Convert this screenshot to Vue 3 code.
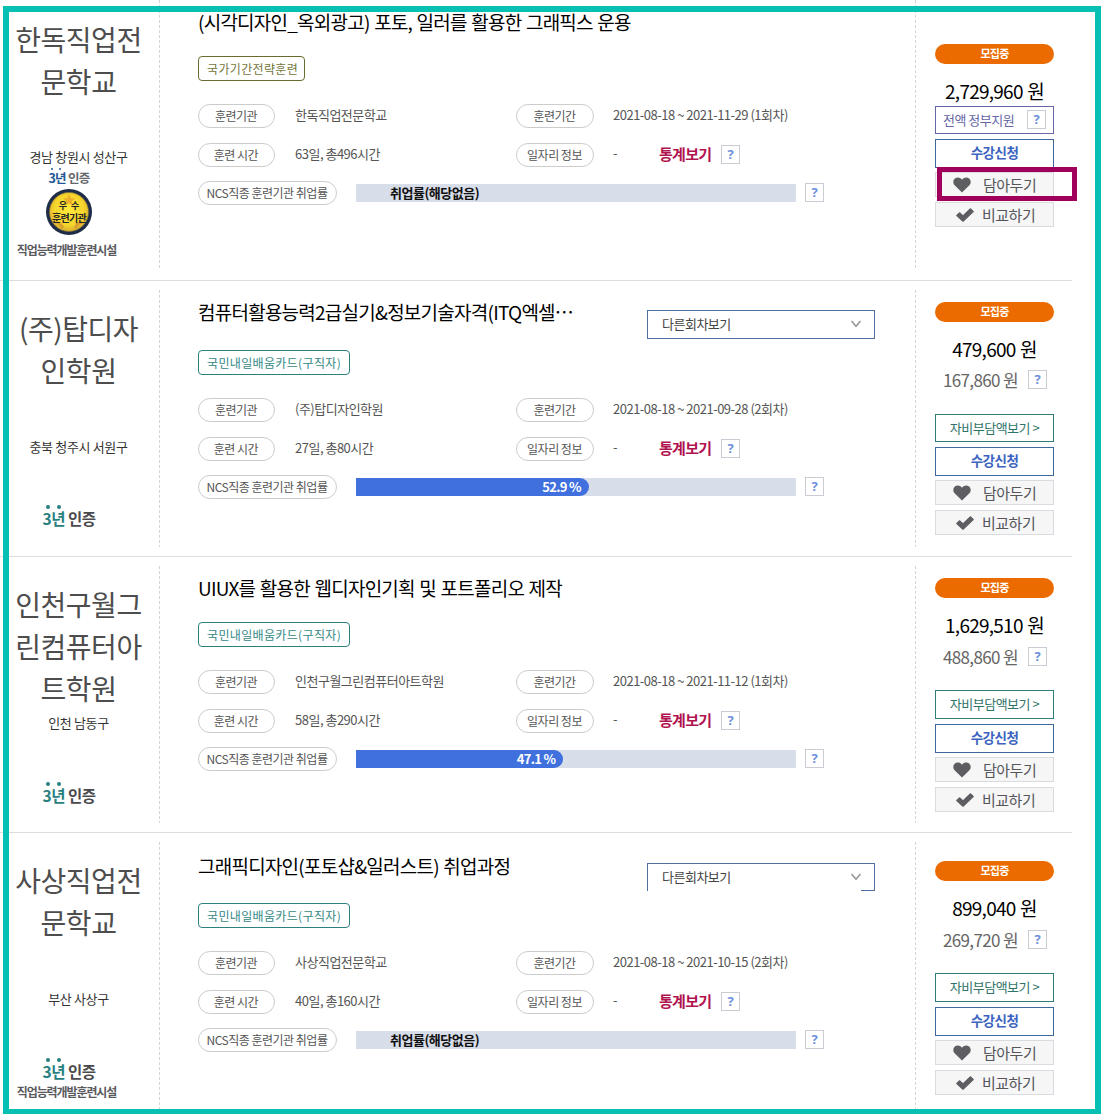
<script setup>
const rows = [
  {
    id: 'r1', name: ['한독직업전', '문학교'], place: '경남 창원시 성산구', badge: 'small', medal: true, facility: true,
    title: '(시각디자인_옥외광고) 포토, 일러를 활용한 그래픽스 운용', tag: '국가기간전략훈련', olive: true,
    org: '한독직업전문학교', period: '2021-08-18 ~ 2021-11-29 (1회차)', hours: '63일, 총496시간',
    rate: null, price: '2,729,960 원', sub: null
  },
  {
    id: 'r2', name: ['(주)탑디자', '인학원'], place: '충북 청주시 서원구', badge: 'large',
    title: '컴퓨터활용능력2급실기&정보기술자격(ITQ엑셀⋯', tag: '국민내일배움카드(구직자)', select: true,
    org: '(주)탑디자인학원', period: '2021-08-18 ~ 2021-09-28 (2회차)', hours: '27일, 총80시간',
    rate: 52.9, price: '479,600 원', sub: '167,860 원'
  },
  {
    id: 'r3', name: ['인천구월그', '린컴퓨터아', '트학원'], place: '인천 남동구', badge: 'large',
    title: 'UIUX를 활용한 웹디자인기획 및 포트폴리오 제작', tag: '국민내일배움카드(구직자)',
    org: '인천구월그린컴퓨터아트학원', period: '2021-08-18 ~ 2021-11-12 (1회차)', hours: '58일, 총290시간',
    rate: 47.1, price: '1,629,510 원', sub: '488,860 원'
  },
  {
    id: 'r4', name: ['사상직업전', '문학교'], place: '부산 사상구', badge: 'large', facility: true,
    title: '그래픽디자인(포토샵&일러스트) 취업과정', tag: '국민내일배움카드(구직자)', select: true,
    org: '사상직업전문학교', period: '2021-08-18 ~ 2021-10-15 (2회차)', hours: '40일, 총160시간',
    rate: null, price: '899,040 원', sub: '269,720 원'
  }
]
</script>

<template>
  <div class="page">
    <section v-for="r in rows" :key="r.id" class="row" :class="r.id">
      <div class="school">
        <div class="name"><div v-for="n in r.name" :key="n">{{ n }}</div></div>
        <div class="place">{{ r.place }}</div>
        <div class="marks">
          <div class="cert" :class="r.badge"><span class="yr"><i></i><i></i>3년</span> 인증</div>
          <div v-if="r.medal" class="medal">
            <svg width="48" height="48" viewBox="0 0 48 48">
              <defs>
                <radialGradient id="gold" cx="50%" cy="45%" r="60%">
                  <stop offset="0" stop-color="#ffe93c" /><stop offset=".65" stop-color="#f6d52c" /><stop offset="1" stop-color="#cfa02e" />
                </radialGradient>
              </defs>
              <circle cx="24" cy="24" r="23" fill="#1f2c47" />
              <circle cx="24" cy="24" r="19.500" fill="url(#gold)" stroke="#8a7a3a" stroke-width=".6" />
              <path d="M24 6l1.800 4 4.200.4-3.200 2.800 1 4.200-3.800-2.200-3.800 2.200 1-4.200-3.200-2.800 4.200-.4z" fill="#eeb02a" />
              <path d="M11 34l4 2 3 4M37 34l-4 2-3 4" stroke="#dba030" stroke-width="3" fill="none" />
            </svg>
            <div class="medal-text"><span class="m1">우 수</span><span class="m2">훈련기관</span></div>
          </div>
          <div v-if="r.facility" class="facility">직업능력개발훈련시설</div>
        </div>
      </div>

      <div class="course">
        <div class="head">
          <div class="title">{{ r.title }}</div>
          <div v-if="r.select" class="select">
            <span>다른회차보기</span>
            <svg width="12" height="8" viewBox="0 0 12 8"><path d="M1.500 1L6 6.200L10.500 1" fill="none" stroke="#999" stroke-width="1.700" /></svg>
          </div>
        </div>
        <div class="tag" :class="{ olive: r.olive }">{{ r.tag }}</div>
        <div class="info">
          <span class="label">훈련기관</span><span class="val">{{ r.org }}</span>
          <span class="label">훈련기간</span><span class="val">{{ r.period }}</span>
        </div>
        <div class="info second">
          <span class="label">훈련 시간</span><span class="val">{{ r.hours }}</span>
          <span class="label">일자리 정보</span>
          <span class="val job"><span class="dash">-</span><b class="stat">통계보기</b><span class="q">?</span></span>
        </div>
        <div class="rate">
          <span class="label wide">NCS직종 훈련기관 취업률</span>
          <div class="bar">
            <div v-if="r.rate" class="fill" :style="{ width: r.rate + '%' }">{{ r.rate }} %</div>
            <div v-else class="none">취업률(해당없음)</div>
          </div>
          <span class="q">?</span>
        </div>
      </div>

      <div class="side">
        <div class="state">모집중</div>
        <div class="price">{{ r.price }}</div>
        <template v-if="r.sub">
          <div class="sub"><span>{{ r.sub }}</span><span class="q">?</span></div>
          <div class="btn own">자비부담액보기 &gt;</div>
        </template>
        <div v-else class="btn support"><span>전액 정부지원</span><span class="q">?</span></div>
        <div class="btn apply">수강신청</div>
        <div class="btn grey keep">
          <svg width="18" height="16" viewBox="0 0 18 16"><path d="M9 15.500L1.600 8.200C-.3 6.200 0 3.100 1.900 1.600C4.200-.2 7.300.5 9 2.800C10.700.5 13.800-.2 16.100 1.600C18 3.100 18.300 6.200 16.400 8.200Z" fill="#5d5d62" /></svg>
          <span>담아두기</span>
          <div v-if="r.id === 'r1'" class="marker"></div>
        </div>
        <div class="btn grey comp">
          <svg width="18" height="14" viewBox="0 0 18 14"><path d="M.8 7.500L3.500 4.800L7 7.900L14.500.8L17.200 3.500L7 13.200Z" fill="#5d5d62" stroke="#5d5d62" stroke-width="1.200" stroke-linejoin="round" /></svg>
          <span>비교하기</span>
        </div>
      </div>
    </section>
    <div class="frame"></div>
  </div>
</template>

<style>
body { background: #fff; }
</style>

<style scoped>
.page { position: relative; width: 1105px; height: 1120px; overflow: hidden; background: #fff; font-family: "Noto Sans CJK KR", "Noto Sans", sans-serif; font-size: 13px; letter-spacing: -.5px; color: #555; white-space: nowrap; }
.page * { box-sizing: border-box; }
.row { display: grid; grid-template-columns: 160px 756px 156px; width: 1072px; height: 276px; border-bottom: 1px solid #ddd; }
.r1 { height: 281px; }
.r4 { border-bottom: 0; }
.school, .course { background: repeating-linear-gradient(to bottom, #d4d4d4 0 3px, transparent 3px 5px) right 9px / 1px 257px no-repeat; }
.r1 .school, .r1 .course { background-position: right 0; background-size: 1px 270px; }
.r4 .school, .r4 .course { background-size: 1px 267px; }

.school { padding-top: 26px; }
.r1 .school { padding-top: 18px; }
.name { height: 127px; padding-right: 3px; text-align: center; font-size: 28px; line-height: 42px; color: #4d4d4d; }
.place { height: 26px; padding-right: 3px; line-height: 25px; text-align: center; font-size: 13px; letter-spacing: -.35px; color: #333; }
.r1 .place { line-height: 24px; }
.marks { display: flex; flex-direction: column; align-items: center; width: 138px; padding-top: 46px; }
.cert { height: 24px; line-height: 24px; font-size: 15.500px; font-weight: 700; color: #4a4a4d; }
.r3 .cert, .r4 .cert { margin-top: 1px; }
.yr { position: relative; color: #27807f; }
.yr i { position: absolute; top: -2px; left: 3px; width: 4px; height: 4px; border-radius: 50%; background: #27807f; }
.yr i + i { left: 14px; }
.r1 .marks { padding-top: 0; }
.cert.small { height: 17px; line-height: 14px; font-size: 12.500px; letter-spacing: -.7px; color: #66686c; }
.small .yr { color: #235695; }
.small .yr i { top: 0; width: 2px; height: 2px; background: #235695; }
.small .yr i + i { left: 11px; }
.medal { position: relative; width: 48px; height: 48px; }
.medal svg { display: block; }
.medal-text { position: absolute; left: 0; top: 12px; width: 48px; display: flex; flex-direction: column; align-items: center; font-weight: 700; color: #252525; }
.m1 { height: 11px; line-height: 11px; font-size: 9px; letter-spacing: 0; word-spacing: 2px; }
.m2 { height: 13px; line-height: 13px; font-size: 10px; letter-spacing: -.7px; }
.facility { height: 16px; line-height: 16px; margin-right: 5px; font-size: 12px; font-weight: 700; letter-spacing: -1.100px; color: #5a5a5e; }
.r1 .facility { margin-top: 6px; }
.r4 .facility { margin-top: 1px; }

.course { padding: 16px 0 0 38px; }
.r1 .course { padding-top: 7px; }
.r4 .course { padding-top: 18px; }
.head { display: flex; height: 49px; }
.r2 .head { height: 53px; }
.r4 .head { height: 52px; }
.title { width: 449px; height: 30px; line-height: 30px; font-size: 19px; letter-spacing: -.76px; word-spacing: 1px; color: #000; }
.select { display: flex; align-items: center; justify-content: space-between; width: 228px; height: 29px; margin-top: 13px; padding: 0 12px 2px 14px; border: 1px solid #4f6f9f; color: #444; }
.r4 .select { height: 28px; margin-top: 12px; border-bottom: 0; background: linear-gradient(#4f6f9f, #4f6f9f) right bottom / 13px 1px no-repeat; }
.tag { width: 152px; height: 25px; padding-left: 8px; border: 1px solid #2c807e; border-radius: 4px; line-height: 23px; font-size: 12px; letter-spacing: .35px; color: #348886; }
.tag.olive { width: 107px; border-color: #696c2e; color: #74763a; }
.info { display: grid; grid-template-columns: 77px 241px 78px 1fr; height: 24px; margin-top: 23px; }
.info.second { margin-top: 15px; }
.label { height: 24px; padding-right: 1px; border: 1px solid #ccc; border-radius: 12px; text-align: center; line-height: 21px; font-size: 12px; color: #555; }
.val { padding-left: 20px; line-height: 21px; }
.val:last-child { padding-left: 19px; }
.job { display: flex; }
.dash { width: 46px; line-height: 19px; }
.stat { width: 62px; line-height: 22px; font-size: 15px; letter-spacing: -.7px; color: #b0134f; }
.q { display: block; flex: none; width: 19px; height: 19px; border: 1px solid #c9ccd2; background: #fff; text-align: center; line-height: 17px; font-family: "Noto Sans", sans-serif; font-size: 13px; font-weight: 700; letter-spacing: 0; color: #6c90dc; }
.job .q { margin-top: 2px; }
.rate { display: flex; margin-top: 14px; }
.wide { width: 139px; }
.bar { width: 440px; height: 18px; margin: 3px 9px 0 19px; background: #d8dee9; line-height: 17px; font-weight: 700; }
.rate .q { margin-top: 2px; }
.fill { height: 18px; padding-right: 8px; border-radius: 0 9px 9px 0; background: #4070dd; text-align: right; letter-spacing: -.7px; color: #fff; }
.none { padding-left: 34px; color: #111; }

.side { padding: 21px 18px 0 19px; }
.r1 .side { padding-top: 44px; }
.r4 .side { padding-top: 28px; }
.state { height: 20px; border-radius: 10px; background: #ec6b00; color: #fff; text-align: center; line-height: 19px; font-size: 11px; font-weight: 700; letter-spacing: -.8px; }
.price { height: 30px; margin-top: 12px; line-height: 29px; text-align: center; font-size: 19px; letter-spacing: -.75px; word-spacing: 1px; color: #000; }
.sub { display: flex; justify-content: space-between; height: 19px; margin: 6px 7px 25px 8px; line-height: 20px; font-size: 17px; letter-spacing: -.65px; color: #666; }
.r3 .sub, .r4 .sub { margin-top: 7px; margin-bottom: 24px; }
.btn { height: 28px; border: 1px solid #2f7d76; text-align: center; line-height: 25px; }
.own { color: #2f7468; }
.r3 .own, .r4 .own { height: 29px; }
.support { display: flex; justify-content: space-between; padding: 3px 7px 0 7px; border-color: #6566a6; color: #6566a6; line-height: 19px; }
.apply { height: 29px; margin-top: 5px; border-color: #3e679c; font-size: 13.500px; font-weight: 700; line-height: 25px; color: #3d64c0; }
.grey { position: relative; display: flex; align-items: center; height: 25px; border-color: #d9dbe0; background: #f6f6f7; font-size: 15px; color: #55555a; }
.grey span { position: static; line-height: 23px; }
.keep { margin-top: 4px; padding-left: 17px; }
.keep span { margin-left: 12px; }
.comp { margin-top: 5px; padding-left: 20px; }
.comp span { margin-left: 8px; }
.marker { position: absolute; left: 1px; top: -6px; width: 140px; height: 34px; border: 5px solid #a0005c; }
.frame { position: absolute; left: 3px; top: 6px; width: 1098px; height: 1108px; border: 6px solid #06c0b4; border-bottom-width: 5px; pointer-events: none; }
</style>
